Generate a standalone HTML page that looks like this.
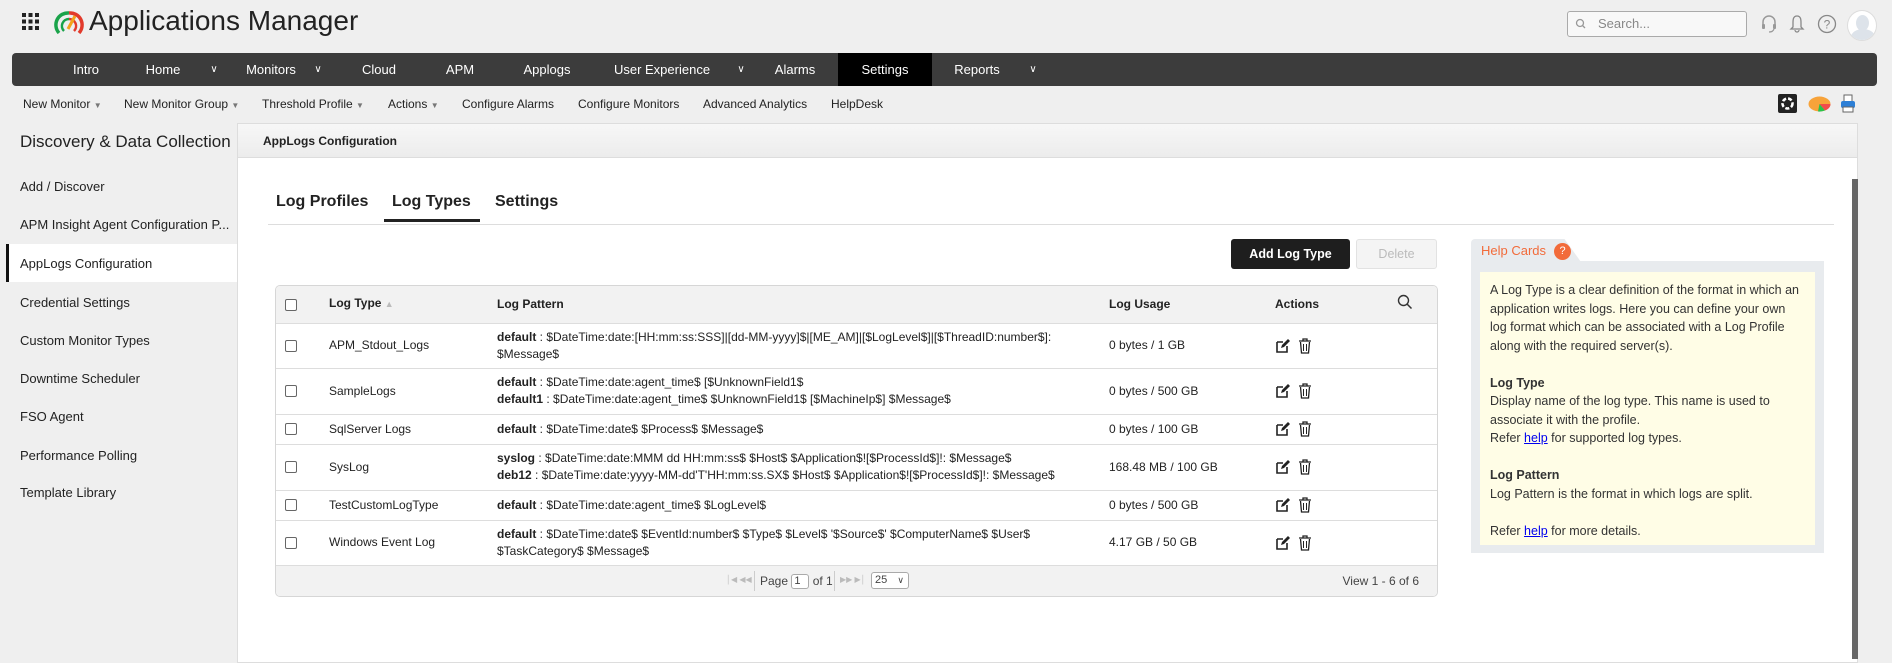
<!DOCTYPE html>
<html><head><meta charset="utf-8"><style>
*{box-sizing:border-box;margin:0;padding:0}
body{width:1892px;height:655px;overflow:hidden;background:#efefef;font-family:"Liberation Sans",Arial,sans-serif;color:#222;position:relative}
.a{position:absolute}
.nav{left:12px;top:53px;width:1865px;height:33px;background:#3c3c3c;border-radius:4px}
.nav span{position:absolute;top:0;line-height:33px;color:#fff;font-size:13px;transform:translateX(-50%);white-space:nowrap}
.nav .ch{font-size:10px}
.sub{top:97px;font-size:12px;color:#222;white-space:nowrap}
.sub i{font-style:normal;font-size:8px;color:#777}
.side{left:20px;font-size:13px;color:#222}
.panel{left:237px;top:123px;width:1621px;height:540px;background:#fff;border:1px solid #ddd}
.hdr{left:237px;top:123px;width:1621px;height:35px;background:linear-gradient(#f7f7f7,#ececec);border:1px solid #ddd;font-size:12px;font-weight:bold;line-height:35px;padding-left:25px}
.tab{top:193px;font-size:16px;font-weight:bold;color:#222}
table{border-collapse:collapse;font-size:12px;color:#222}
.tbl{left:275px;top:285px;width:1163px;border:1px solid #d6d6d6;border-radius:5px;overflow:hidden;background:#fff}
td,th{border-bottom:1px solid #ddd;text-align:left;vertical-align:middle;line-height:17px}
th{background:#f2f2f2;height:37px;font-weight:bold;font-size:12px}
.cb{display:inline-block;width:12px;height:12px;border:1px solid #666;border-radius:2px;background:#fff;vertical-align:middle}
.ic{display:inline-block;vertical-align:middle}
.help{font-size:12.5px;line-height:18.5px;color:#333}
.help a{color:#00e;text-decoration:underline}
.pg div{white-space:nowrap}
</style></head><body>
<svg class="a" style="left:22px;top:13px" width="17" height="17"><g fill="#222"><rect x="0" y="0" width="4" height="4"/><rect x="6.5" y="0" width="4" height="4"/><rect x="13" y="0" width="4" height="4"/><rect x="0" y="6.5" width="4" height="4"/><rect x="6.5" y="6.5" width="4" height="4"/><rect x="13" y="6.5" width="4" height="4"/><rect x="0" y="13" width="4" height="4"/><rect x="6.5" y="13" width="4" height="4"/><rect x="13" y="13" width="4" height="4"/></g></svg>
<svg class="a" style="left:53px;top:9px" width="32" height="26" viewBox="0 0 32 26"><path d="M6 24 A12 12 0 0 1 16 4" stroke="#1aa34a" stroke-width="3.5" fill="none"/><path d="M16 4 A12 12 0 0 1 26 24" stroke="#e23a2b" stroke-width="3.5" fill="none"/><path d="M11 22 A7 7 0 0 1 16 10" stroke="#1aa34a" stroke-width="2.5" fill="none"/><path d="M16 10 A7 7 0 0 1 21 22" stroke="#e23a2b" stroke-width="2.5" fill="none"/><path d="M15 20 L22 7" stroke="#f4a31b" stroke-width="3"/></svg>
<div class="a" style="left:89px;top:5px;font-size:28px;color:#222">Applications Manager</div>
<div class="a" style="left:1567px;top:11px;width:180px;height:26px;border:1px solid #aaa;border-radius:3px;background:#f8f8f8;font-size:13px;color:#888;line-height:24px;padding-left:30px">Search...</div>
<svg class="a" style="left:1575px;top:18px" width="14" height="12"><circle cx="5" cy="5" r="3.5" stroke="#999" fill="none" stroke-width="1.3"/><path d="M7.5 7.5 L10 10" stroke="#999" stroke-width="1.3"/></svg>
<svg class="a" style="left:1761px;top:14px" width="16" height="20"><path d="M2 11 V8 A6 6 0 0 1 14 8 V11" stroke="#999" stroke-width="1.5" fill="none"/><rect x="1" y="10" width="3" height="5" rx="1" fill="#999"/><rect x="12" y="10" width="3" height="5" rx="1" fill="#999"/><path d="M13 15 Q12 18 8 18" stroke="#999" stroke-width="1.2" fill="none"/></svg>
<svg class="a" style="left:1789px;top:14px" width="16" height="20"><path d="M8 2 C4 2 4 6 4 9 V13 L2 15 H14 L12 13 V9 C12 6 12 2 8 2Z" stroke="#888" stroke-width="1.3" fill="none"/><path d="M6 16 A2 2 0 0 0 10 16" stroke="#888" stroke-width="1.2" fill="none"/></svg>
<svg class="a" style="left:1817px;top:14px" width="20" height="20"><circle cx="10" cy="10" r="8.5" stroke="#888" stroke-width="1.3" fill="none"/><text x="10" y="14.5" text-anchor="middle" font-size="12" fill="#888" font-family="Liberation Sans">?</text></svg>
<div class="a" style="left:1847px;top:10px;width:30px;height:31px;border-radius:50%;background:#fff;border:1px solid #ddd;overflow:hidden"><div style="position:absolute;left:8px;top:4px;width:13px;height:16px;border-radius:50%;background:#dde3ea"></div><div style="position:absolute;left:3px;top:18px;width:24px;height:16px;border-radius:50%;background:#dde3ea"></div></div>
<div class="a nav">
<div style="position:absolute;left:826px;top:0;width:94px;height:33px;background:#000"></div>
<span style="left:74px">Intro</span><span style="left:151px">Home</span><span class="ch" style="left:202px">&#8744;</span>
<span style="left:259px">Monitors</span><span class="ch" style="left:306px">&#8744;</span><span style="left:367px">Cloud</span>
<span style="left:448px">APM</span><span style="left:535px">Applogs</span><span style="left:650px">User Experience</span><span class="ch" style="left:729px">&#8744;</span>
<span style="left:783px">Alarms</span><span style="left:873px">Settings</span><span style="left:965px">Reports</span><span class="ch" style="left:1021px">&#8744;</span>
</div>
<div class="a sub" style="left:23px">New Monitor <i>&#9660;</i></div>
<div class="a sub" style="left:124px">New Monitor Group <i>&#9660;</i></div>
<div class="a sub" style="left:262px">Threshold Profile <i>&#9660;</i></div>
<div class="a sub" style="left:388px">Actions <i>&#9660;</i></div>
<div class="a sub" style="left:462px">Configure Alarms</div>
<div class="a sub" style="left:578px">Configure Monitors</div>
<div class="a sub" style="left:703px">Advanced Analytics</div>
<div class="a sub" style="left:831px">HelpDesk</div>
<div class="a" style="left:1778px;top:94px;width:19px;height:19px;background:#222;border-radius:2px"><svg width="19" height="19"><circle cx="9.5" cy="9.5" r="5" stroke="#fff" stroke-width="2.5" fill="none" stroke-dasharray="4 2"/></svg></div>
<svg class="a" style="left:1808px;top:96px" width="23" height="16"><ellipse cx="11.5" cy="8" rx="11" ry="7.5" fill="#f7a33a"/><path d="M11.5 8 L22.5 8 A11 7.5 0 0 1 17 14.5Z" fill="#f14b4b"/><path d="M11.5 8 L17 14.5 A11 7.5 0 0 1 10 15.5Z" fill="#2bc24a"/></svg>
<svg class="a" style="left:1840px;top:94px" width="16" height="20"><rect x="4" y="1" width="8" height="7" fill="#fff" stroke="#666"/><rect x="1" y="7" width="14" height="7" rx="2" fill="#2d7fd6"/><rect x="3" y="13" width="10" height="5" fill="#fff" stroke="#666"/></svg>
<div class="a" style="left:20px;top:132px;font-size:17px;color:#222">Discovery &amp; Data Collection</div>
<div class="a" style="left:6px;top:244px;width:231px;height:38px;background:#fff;border-left:3px solid #111"></div>
<div class="a side" style="top:179px">Add / Discover</div>
<div class="a side" style="top:217px">APM Insight Agent Configuration P...</div>
<div class="a side" style="top:256px">AppLogs Configuration</div>
<div class="a side" style="top:295px">Credential Settings</div>
<div class="a side" style="top:333px">Custom Monitor Types</div>
<div class="a side" style="top:371px">Downtime Scheduler</div>
<div class="a side" style="top:409px">FSO Agent</div>
<div class="a side" style="top:448px">Performance Polling</div>
<div class="a side" style="top:485px">Template Library</div>
<div class="a panel"></div>
<div class="a hdr">AppLogs Configuration</div>
<div class="a" style="left:1852px;top:179px;width:6px;height:480px;background:#666"></div>
<div class="a tab" style="left:276px">Log Profiles</div>
<div class="a tab" style="left:392px">Log Types</div>
<div class="a tab" style="left:495px">Settings</div>
<div class="a" style="left:268px;top:224px;width:1566px;height:1px;background:#ddd"></div>
<div class="a" style="left:384px;top:219px;width:96px;height:3px;background:#222"></div>
<div class="a" style="left:1231px;top:239px;width:119px;height:30px;background:#1e1e1e;border-radius:3px;color:#fff;font-size:12.5px;font-weight:bold;text-align:center;line-height:30px">Add Log Type</div>
<div class="a" style="left:1356px;top:239px;width:81px;height:30px;background:#f4f4f4;border:1px solid #e2e2e2;border-radius:3px;color:#bbb;font-size:12.5px;text-align:center;line-height:28px">Delete</div>
<div class="a tbl"><table style="width:100%">
<tr><th style="width:53px;padding-left:9px"><span class="cb"></span></th><th style="width:168px">Log Type <span style="color:#bbb;font-size:9px">&#9650;</span></th><th style="width:612px">Log Pattern</th><th style="width:166px">Log Usage</th><th>Actions</th><th style="width:40px"><svg width="16" height="16"><circle cx="6.5" cy="6.5" r="5" stroke="#333" stroke-width="1.4" fill="none"/><path d="M10 10 L14.5 14.5" stroke="#333" stroke-width="1.5"/></svg></th></tr>
<tr style="height:45px"><td style="padding-left:9px"><span class="cb"></span></td><td>APM_Stdout_Logs</td><td><b>default</b> : $DateTime:date:[HH:mm:ss:SSS]|[dd-MM-yyyy]$|[ME_AM]|[$LogLevel$]|[$ThreadID:number$]:<br>$Message$</td><td>0 bytes / 1 GB</td><td>ACT</td><td></td></tr>
<tr style="height:46px"><td style="padding-left:9px"><span class="cb"></span></td><td>SampleLogs</td><td><b>default</b> : $DateTime:date:agent_time$ [$UnknownField1$<br><b>default1</b> : $DateTime:date:agent_time$ $UnknownField1$ [$MachineIp$] $Message$</td><td>0 bytes / 500 GB</td><td>ACT</td><td></td></tr>
<tr style="height:30px"><td style="padding-left:9px"><span class="cb"></span></td><td>SqlServer Logs</td><td><b>default</b> : $DateTime:date$ $Process$ $Message$</td><td>0 bytes / 100 GB</td><td>ACT</td><td></td></tr>
<tr style="height:46px"><td style="padding-left:9px"><span class="cb"></span></td><td>SysLog</td><td><b>syslog</b> : $DateTime:date:MMM dd HH:mm:ss$ $Host$ $Application$![$ProcessId$]!: $Message$<br><b>deb12</b> : $DateTime:date:yyyy-MM-dd'T'HH:mm:ss.SX$ $Host$ $Application$![$ProcessId$]!: $Message$</td><td>168.48 MB / 100 GB</td><td>ACT</td><td></td></tr>
<tr style="height:30px"><td style="padding-left:9px"><span class="cb"></span></td><td>TestCustomLogType</td><td><b>default</b> : $DateTime:date:agent_time$ $LogLevel$</td><td>0 bytes / 500 GB</td><td>ACT</td><td></td></tr>
<tr style="height:45px"><td style="padding-left:9px"><span class="cb"></span></td><td>Windows Event Log</td><td><b>default</b> : $DateTime:date$ $EventId:number$ $Type$ $Level$ '$Source$' $ComputerName$ $User$<br>$TaskCategory$ $Message$</td><td>4.17 GB / 50 GB</td><td>ACT</td><td></td></tr>
</table>
<div class="pg" style="height:30px;background:#f2f2f2;position:relative;font-size:12px;color:#444">
<div style="position:absolute;left:450px;top:9px;color:#bbb;font-size:8px">&#9474;&#9664; &#9664;&#9664;</div>
<div style="position:absolute;left:478px;top:5px;height:20px;border-left:1px solid #ccc"></div>
<div style="position:absolute;left:484px;top:8px">Page <span style="display:inline-block;width:18px;height:15px;border:1px solid #aaa;border-radius:3px;background:#fff;font-size:11px;line-height:13px;padding-left:2px;vertical-align:middle">1</span> of 1</div>
<div style="position:absolute;left:558px;top:5px;height:20px;border-left:1px solid #ccc"></div>
<div style="position:absolute;left:564px;top:9px;color:#bbb;font-size:8px">&#9654;&#9654; &#9654;&#9474;</div>
<div style="position:absolute;left:595px;top:6px;width:38px;height:17px;border:1px solid #aaa;border-radius:3px;background:#fff;font-size:11px;line-height:15px;padding-left:3px">25 <span style="position:absolute;right:4px;font-size:9px">&#8744;</span></div>
<div style="position:absolute;right:18px;top:8px">View 1 - 6 of 6</div>
</div></div>
<div class="a" style="left:1471px;top:239px;width:110px;height:23px;background:#e8ebee;clip-path:polygon(0 0,85% 0,100% 100%,0 100%);border-radius:4px 0 0 0"></div>
<div class="a" style="left:1481px;top:243px;font-size:13px;color:#f26b3a">Help Cards</div>
<div class="a" style="left:1554px;top:243px;width:17px;height:17px;border-radius:50%;background:#f26b3a;color:#fff;font-size:11px;text-align:center;line-height:17px">?</div>
<div class="a" style="left:1471px;top:261px;width:353px;height:292px;background:#e8ebee"></div>
<div class="a help" style="left:1480px;top:272px;width:335px;height:273px;background:#fffde6;padding:9px 10px">A Log Type is a clear definition of the format in which an application writes logs. Here you can define your own log format which can be associated with a Log Profile along with the required server(s).<br><br><b>Log Type</b><br>Display name of the log type. This name is used to associate it with the profile.<br>Refer <a>help</a> for supported log types.<br><br><b>Log Pattern</b><br>Log Pattern is the format in which logs are split.<br><br>Refer <a>help</a> for more details.</div>
<script>
document.querySelectorAll('td').forEach(function(t){if(t.textContent==='ACT'){t.innerHTML='<svg class="ic" width="16" height="16"><path d="M2 4 H8 M2 4 V14 H12 V8" stroke="#222" stroke-width="1.6" fill="none"/><path d="M6 10 L7 7 L13 1 L15 3 L9 9Z" fill="#222"/></svg> <svg class="ic" width="14" height="16" style="margin-left:4px"><path d="M1 3 H13 M5 3 V1 H9 V3" stroke="#222" stroke-width="1.3" fill="none"/><path d="M2.5 4 L3.5 15 H10.5 L11.5 4" stroke="#222" stroke-width="1.3" fill="none"/><path d="M5.5 6 V13 M8.5 6 V13" stroke="#222" stroke-width="1"/></svg>';}});
</script>
</body></html>
